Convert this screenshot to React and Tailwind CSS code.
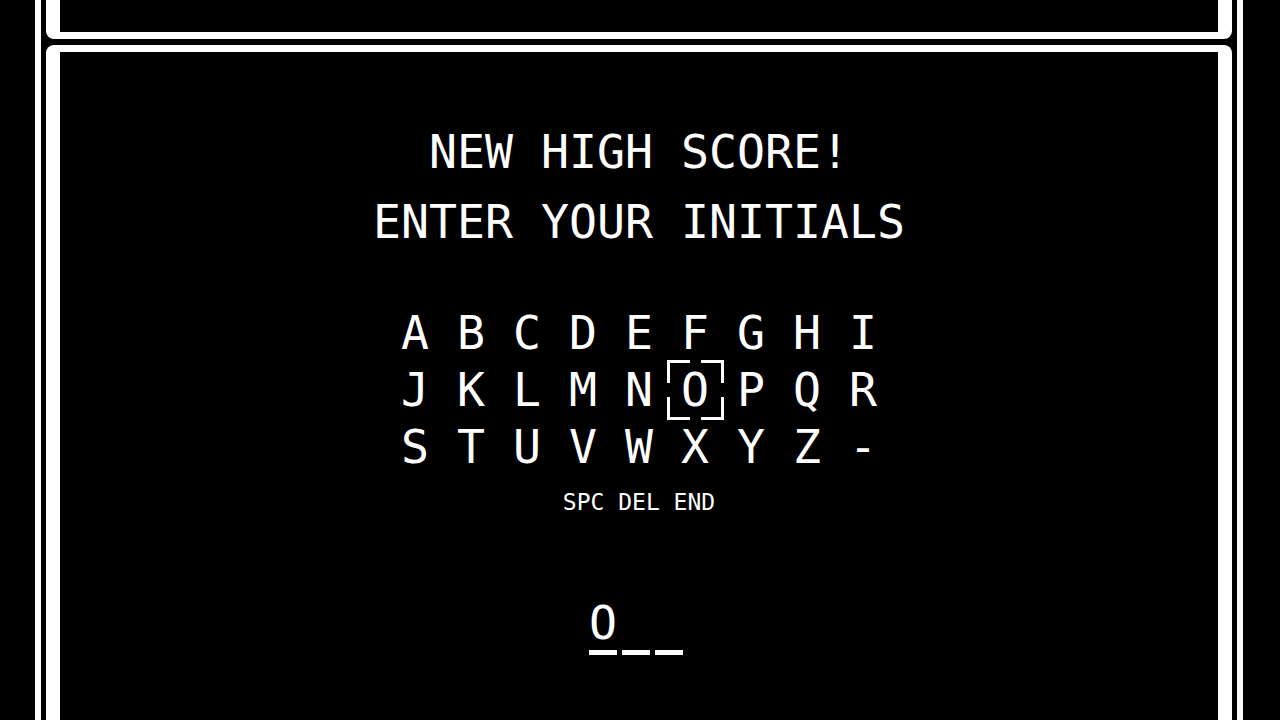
const rows = ["ABCDEFGHI", "JKLMNOPQR", "STUVWXYZ-"];
const selected = "O";
const initials = ["O", "", ""];

const Corner = ({ className }) => (
  <div className={`absolute w-[23px] h-[23px] border-white ${className}`}></div>
);

const LetterCell = ({ ch }) => {
  return (
    <div className="relative w-[56px] h-[57px] flex items-center justify-center leading-[57px]">
      {ch === selected && (
        <>
          <Corner className="left-0 -top-[2px] border-l-[3px] border-t-[3px]" />
          <Corner className="-right-[1px] -top-[2px] border-r-[3px] border-t-[3px]" />
          <Corner className="left-0 -bottom-[1px] border-l-[3px] border-b-[3px]" />
          <Corner className="-right-[1px] -bottom-[1px] border-r-[3px] border-b-[3px]" />
        </>
      )}
      <span>{ch}</span>
    </div>
  );
};

const App = () => {
  return (
    <div className="h-screen overflow-hidden bg-black text-white font-['DejaVu_Sans_Mono',monospace]">
      <div className="ml-[35px] w-[1208px] h-full border-x-[6px] border-white px-[5px] flex flex-col gap-[6px]">
        {/* top panel, only its bottom edge is on screen */}
        <div className="h-[39px] shrink-0 border-x-[14px] border-b-[7px] border-t-0 border-white rounded-b-[8px]"></div>

        {/* high score entry panel */}
        <div className="flex-1 min-h-[720px] border-x-[14px] border-t-[7px] border-b-0 border-white rounded-t-[8px] flex flex-col items-center pt-[65px]">
          <h1 className="text-[46.5px] leading-[70px]">NEW HIGH SCORE!</h1>
          <h2 className="text-[46.5px] leading-[70px]">ENTER YOUR INITIALS</h2>

          <div className="mt-[48px] flex flex-col text-[46.5px]">
            {rows.map((row, i) => (
              <div className="flex" key={i}>
                {row.split("").map((ch) => (
                  <LetterCell ch={ch} key={ch} />
                ))}
              </div>
            ))}
          </div>

          <div className="mt-[14px] text-[23px] leading-[24px]">SPC DEL END</div>

          <div className="mt-[86px] pr-[6px] flex gap-[5px]">
            {initials.map((ch, i) => (
              <div className="w-[28px] flex flex-col items-center" key={i}>
                <span className="h-[46px] text-[46.5px] leading-[46px]">{ch}</span>
                <div className="mt-[4px] w-full h-[5px] bg-white"></div>
              </div>
            ))}
          </div>
        </div>
      </div>
    </div>
  );
};

export default App;
